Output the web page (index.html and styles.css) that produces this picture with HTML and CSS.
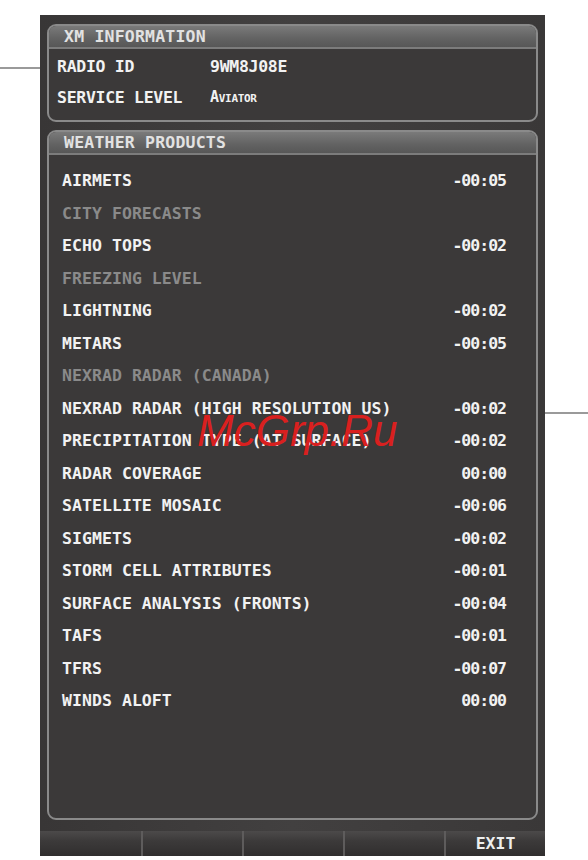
FILE: index.html
```html
<!DOCTYPE html>
<html lang="en">

<head>
  <meta charset="UTF-8">
  <meta name="viewport" content="width=device-width, initial-scale=1.0">
  <title>XM Information</title>
  <link rel="stylesheet" href="styles.css">
</head>

<body>
  <div class="page">
    <div class="leader leader-left"></div>

    <div class="device">
      <!-- XM info panel -->
      <section class="panel panel-info">
        <div class="panel-header">XM INFORMATION</div>
        <div class="info-body">
          <div class="info-row"><span class="info-label">RADIO ID</span><span class="info-value">9WM8J08E</span></div>
          <div class="info-row"><span class="info-label">SERVICE LEVEL</span><span class="info-value smallcaps">Aviator</span></div>
        </div>
      </section>

      <!-- Weather products panel -->
      <section class="panel panel-weather">
        <div class="panel-header">WEATHER PRODUCTS</div>
        <ul class="product-list">
          <li class="product"><span>AIRMETS</span><span class="age">-00:05</span></li>
          <li class="product disabled"><span>CITY FORECASTS</span></li>
          <li class="product"><span>ECHO TOPS</span><span class="age">-00:02</span></li>
          <li class="product disabled"><span>FREEZING LEVEL</span></li>
          <li class="product"><span>LIGHTNING</span><span class="age">-00:02</span></li>
          <li class="product"><span>METARS</span><span class="age">-00:05</span></li>
          <li class="product disabled"><span>NEXRAD RADAR (CANADA)</span></li>
          <li class="product"><span>NEXRAD RADAR (HIGH RESOLUTION US)</span><span class="age">-00:02</span></li>
          <li class="product"><span>PRECIPITATION TYPE (AT SURFACE)</span><span class="age">-00:02</span></li>
          <li class="product"><span>RADAR COVERAGE</span><span class="age">00:00</span></li>
          <li class="product"><span>SATELLITE MOSAIC</span><span class="age">-00:06</span></li>
          <li class="product"><span>SIGMETS</span><span class="age">-00:02</span></li>
          <li class="product"><span>STORM CELL ATTRIBUTES</span><span class="age">-00:01</span></li>
          <li class="product"><span>SURFACE ANALYSIS (FRONTS)</span><span class="age">-00:04</span></li>
          <li class="product"><span>TAFS</span><span class="age">-00:01</span></li>
          <li class="product"><span>TFRS</span><span class="age">-00:07</span></li>
          <li class="product"><span>WINDS ALOFT</span><span class="age">00:00</span></li>
        </ul>
      </section>

      <!-- Softkeys -->
      <div class="softkeys">
        <div class="softkey"></div>
        <div class="softkey"></div>
        <div class="softkey"></div>
        <div class="softkey"></div>
        <div class="softkey">EXIT</div>
      </div>
    </div>

    <div class="leader leader-right"></div>
  </div>

  <div class="watermark">McGrp.Ru</div>
</body>

</html>
```

FILE: styles.css
```css
body {
  margin: 0;
  background-color: #ffffff;
  font-family: "DejaVu Sans Mono", monospace;
  font-weight: bold;
  font-size: 16.5px;
  color: #f2f2f2;
}

.page {
  display: flex;
  align-items: flex-start;
  padding-top: 15px;
  height: 845px;
}

.leader {
  height: 2px;
  background-color: #9a9a9a;
}

.leader-left {
  width: 40px;
  margin-top: 52px;
}

.leader-right {
  flex: 1;
  margin-top: 397px;
}

.device {
  width: 505px;
  height: 841px;
  box-sizing: border-box;
  padding: 9px 7px 0 7px;
  display: flex;
  flex-direction: column;
  background: linear-gradient(90deg, #383636, #424040 50%, #3a3838);
}

.panel {
  border: 2px solid #8a8a8a;
  border-radius: 9px;
  background-color: #3b3939;
  overflow: hidden;
}

.panel-info {
  height: 98px;
  box-sizing: border-box;
}

.panel-weather {
  flex: 1;
  margin-top: 8px;
  margin-bottom: 11px;
}

.panel-header {
  height: 21px;
  line-height: 21px;
  padding-left: 15px;
  color: #e2e2e2;
  letter-spacing: 0.2px;
  background: linear-gradient(180deg, #7a7a7a, #626262 60%, #575757);
  border-bottom: 2px solid #7c7c7c;
}

.info-body {
  padding: 2px 0 0 8px;
}

.info-row {
  display: flex;
  height: 31px;
  line-height: 31px;
  letter-spacing: -0.3px;
}

.info-label {
  width: 153px;
}

.smallcaps {
  font-variant: small-caps;
  font-size: 15px;
}

.product-list {
  list-style-type: none;
  margin: 0;
  padding: 10px 30px 0 13px;
}

.product {
  display: flex;
  justify-content: space-between;
  height: 32.5px;
  line-height: 32.5px;
  letter-spacing: 0.05px;
}

.product.disabled {
  color: #8a8a8a;
}

.age {
  letter-spacing: -1px;
}

.softkeys {
  display: grid;
  grid-template-columns: repeat(5, 1fr);
  grid-template-rows: 25px;
  height: 25px;
  margin: 0 -7px;
  background: linear-gradient(180deg, #4c4a4a, #3c3a3a 40%, #302e2e);
}

.softkey {
  border-left: 2px solid #5e5c5c;
  text-align: center;
  line-height: 25px;
  color: #eeeeee;
}

.softkey:first-child {
  border-left: none;
}

.watermark {
  position: absolute;
  left: 197px;
  top: 409px;
  font-family: "Liberation Sans", Arial, sans-serif;
  font-style: italic;
  font-weight: normal;
  font-size: 44px;
  line-height: 44px;
  color: #d9201f;
}
```
